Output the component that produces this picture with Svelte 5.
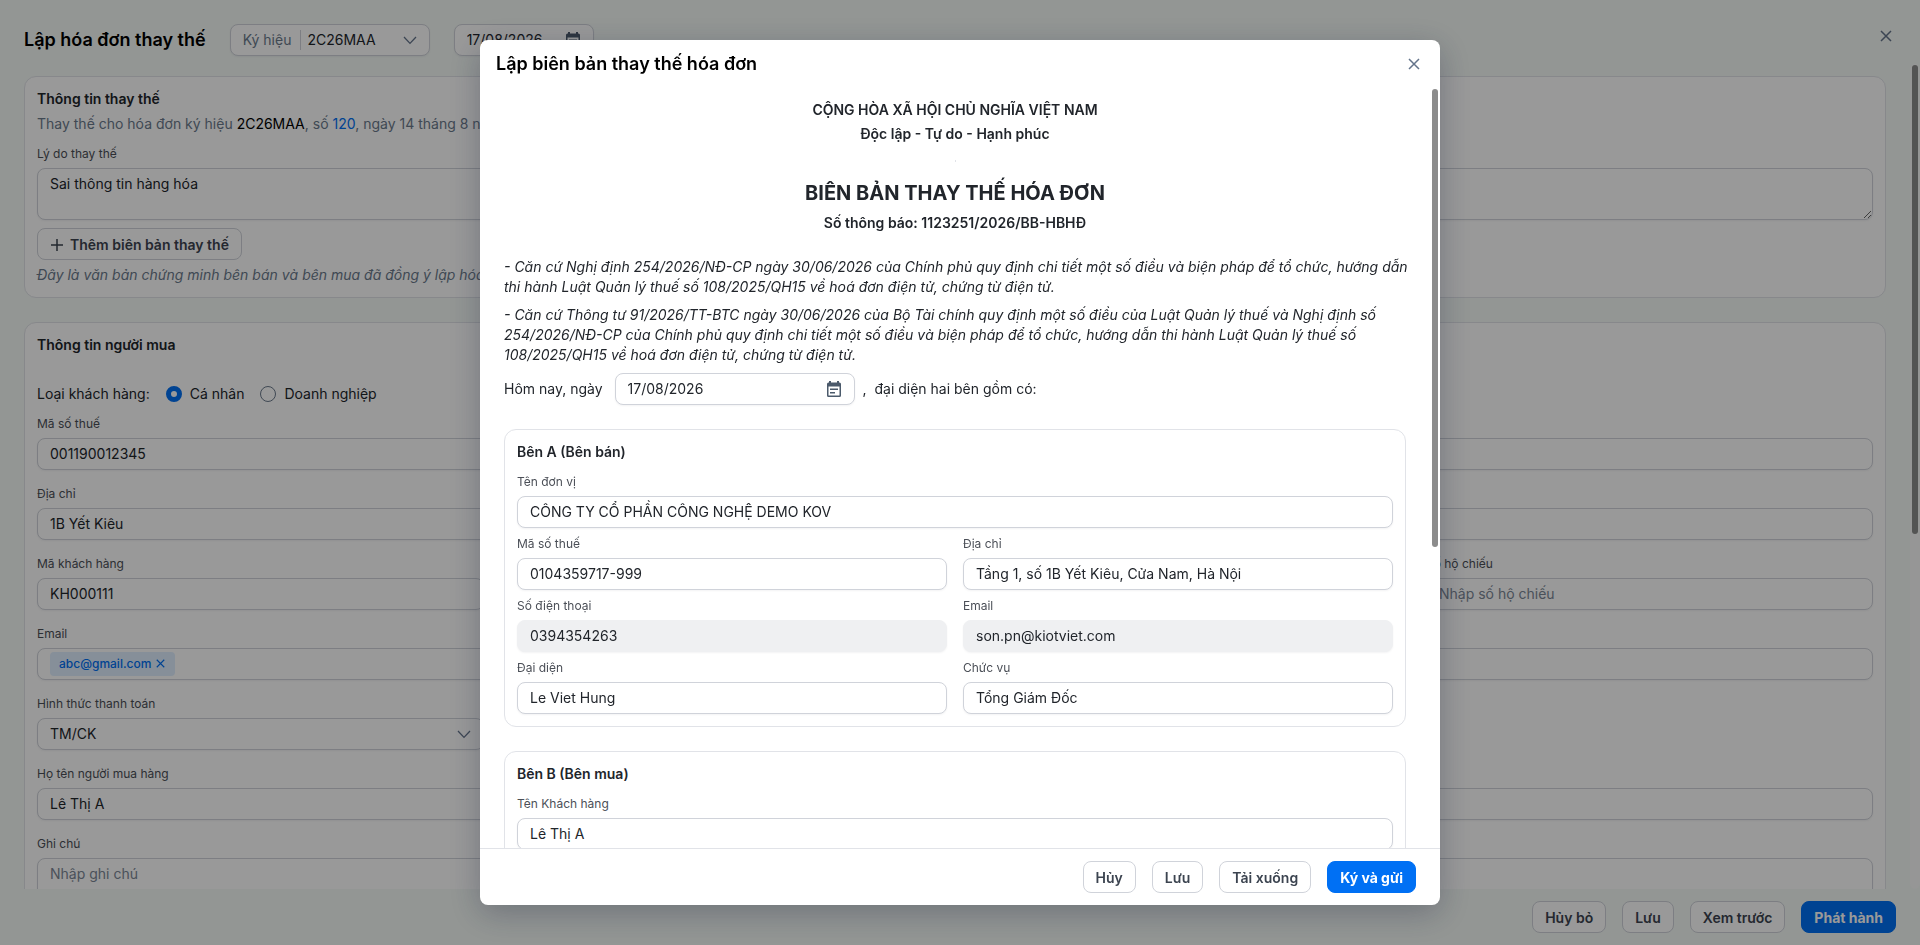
<script lang="ts">
	interface Field {
		id: string;
		label: string;
		value?: string;
		placeholder?: string;
		type?: 'text' | 'line' | 'textarea' | 'select' | 'tags';
		size?: 'full' | 'half' | 'first' | 'last';
		disabled?: boolean;
	}

	let reason = $state('Sai thông tin hàng hóa');
	let customerType = $state('personal');
	let emails = $state(['abc@gmail.com']);

	const buyerFields: Field[] = [
		{ id: 'tax', label: 'Mã số thuế', value: '001190012345' },
		{ id: 'address', label: 'Địa chỉ', value: '1B Yết Kiêu' },
		{ id: 'code', label: 'Mã khách hàng', value: 'KH000111', size: 'first' },
		{ id: 'passport', label: 'Số hộ chiếu', placeholder: 'Nhập số hộ chiếu', size: 'last' },
		{ id: 'email', label: 'Email', type: 'tags' },
		{ id: 'payment', label: 'Hình thức thanh toán', value: 'TM/CK', type: 'select', size: 'first' },
		{ id: 'buyer', label: 'Họ tên người mua hàng', value: 'Lê Thị A' },
		{ id: 'note', label: 'Ghi chú', placeholder: 'Nhập ghi chú', type: 'textarea' }
	];

	const sellerFields: Field[] = [
		{ id: 'a-name', label: 'Tên đơn vị', value: 'CÔNG TY CỔ PHẦN CÔNG NGHỆ DEMO KOV', type: 'line' },
		{ id: 'a-tax', label: 'Mã số thuế', value: '0104359717-999', size: 'half' },
		{ id: 'a-address', label: 'Địa chỉ', value: 'Tầng 1, số 1B Yết Kiêu, Cửa Nam, Hà Nội', size: 'half' },
		{ id: 'a-phone', label: 'Số điện thoại', value: '0394354263', size: 'half', disabled: true },
		{ id: 'a-email', label: 'Email', value: 'son.pn@kiotviet.com', size: 'half', disabled: true },
		{ id: 'a-rep', label: 'Đại diện', value: 'Le Viet Hung', size: 'half' },
		{ id: 'a-role', label: 'Chức vụ', value: 'Tổng Giám Đốc', size: 'half' }
	];

	const customerFields: Field[] = [
		{ id: 'b-name', label: 'Tên Khách hàng', value: 'Lê Thị A', type: 'line' }
	];

	function removeEmail(email: string) {
		emails = emails.filter((item) => item !== email);
	}
</script>

{#snippet closeIcon(size: number)}
	<svg width={size} height={size} viewBox="0 0 12 12" aria-hidden="true">
		<path d="M1 1l10 10M11 1L1 11" fill="none" stroke="currentColor" stroke-width="1.5" />
	</svg>
{/snippet}

{#snippet chevron()}
	<svg class="chevron" width="14" height="14" viewBox="0 0 14 14" aria-hidden="true">
		<path d="M1 4l6 6.4L13 4" fill="none" stroke="currentColor" stroke-width="1.3" />
	</svg>
{/snippet}

{#snippet calendar()}
	<svg class="calendar" width="16" height="18" viewBox="0 0 16 18" aria-hidden="true">
		<path
			fill="currentColor"
			fill-rule="evenodd"
			d="M3 1h2v1.5h6V1h2v1.5h.5A1.5 1.5 0 0 1 15 4v11.5a1.5 1.5 0 0 1-1.5 1.5h-11A1.5 1.5 0 0 1 1 15.5V4a1.5 1.5 0 0 1 1.5-1.5H3zM2.5 6.5v9h11v-9zM4 8.5h8V10H4zM4 12h5v1.5H4z"
		/>
	</svg>
{/snippet}

{#snippet fieldBox(field: Field)}
	<div class="field {field.size ?? 'full'}">
		<label for={field.id}>{field.label}</label>
		{#if field.type === 'textarea'}
			<textarea class="control" id={field.id} placeholder={field.placeholder}></textarea>
		{:else if field.type === 'line'}
			<textarea class="control line" id={field.id} rows="1" value={field.value}></textarea>
		{:else if field.type === 'select'}
			<div class="control with-icon">
				<select id={field.id}>
					<option>{field.value}</option>
				</select>
				{@render chevron()}
			</div>
		{:else if field.type === 'tags'}
			<div class="control tags">
				{#each emails as email}
					<span class="tag">
						{email}
						<button type="button" aria-label="Xóa" onclick={() => removeEmail(email)}>
							{@render closeIcon(9)}
						</button>
					</span>
				{/each}
				<input id={field.id} type="text" />
			</div>
		{:else}
			<input
				class="control"
				id={field.id}
				type="text"
				value={field.value ?? ''}
				placeholder={field.placeholder}
				disabled={field.disabled}
			/>
		{/if}
	</div>
{/snippet}

<div class="page">
	<header class="page-header">
		<h1>Lập hóa đơn thay thế</h1>
		<div class="control with-icon symbol">
			<label for="symbol">Ký hiệu</label>
			<select id="symbol">
				<option>2C26MAA</option>
			</select>
			{@render chevron()}
		</div>
		<div class="control with-icon invoice-date">
			<input type="text" aria-label="Ngày hóa đơn" value="17/08/2026" />
			{@render calendar()}
		</div>
		<button class="close" type="button" aria-label="Đóng">{@render closeIcon(12)}</button>
	</header>

	<div class="scroller">
		<main class="content">
			<section class="card">
				<h2>Thông tin thay thế</h2>
				<p class="origin">
					Thay thế cho hóa đơn ký hiệu <strong>2C26MAA</strong>, số <a href="#120">120</a>, ngày 14 tháng 8 năm 2026
				</p>
				<div class="field">
					<label for="reason">Lý do thay thế</label>
					<textarea class="control" id="reason" bind:value={reason}></textarea>
				</div>
				<button class="btn add" type="button">
					<svg width="14" height="14" viewBox="0 0 14 14" aria-hidden="true">
						<path d="M7 1v12M1 7h12" fill="none" stroke="currentColor" stroke-width="1.5" />
					</svg>
					Thêm biên bản thay thế
				</button>
				<p class="hint">Đây là văn bản chứng minh bên bán và bên mua đã đồng ý lập hóa</p>
			</section>

			<section class="card">
				<h2>Thông tin người mua</h2>
				<div class="customer-type" role="radiogroup" aria-label="Loại khách hàng">
					<span>Loại khách hàng:</span>
					<label>
						<input type="radio" value="personal" bind:group={customerType} />
						Cá nhân
					</label>
					<label>
						<input type="radio" value="company" bind:group={customerType} />
						Doanh nghiệp
					</label>
				</div>
				<div class="fields buyer">
					{#each buyerFields as field (field.id)}
						{@render fieldBox(field)}
					{/each}
				</div>
			</section>
		</main>
		<div class="track"><div class="thumb page-thumb"></div></div>
	</div>

	<footer class="actions">
		<button class="btn" type="button">Hủy bỏ</button>
		<button class="btn" type="button">Lưu</button>
		<button class="btn" type="button">Xem trước</button>
		<button class="btn primary" type="button">Phát hành</button>
	</footer>
</div>

<div class="backdrop">
	<div class="modal" role="dialog" aria-modal="true" aria-labelledby="modal-title">
		<header class="modal-header">
			<h1 id="modal-title">Lập biên bản thay thế hóa đơn</h1>
			<button class="close" type="button" aria-label="Đóng">{@render closeIcon(12)}</button>
		</header>

		<div class="scroller">
			<div class="content document">
				<div class="national">
					<p>CỘNG HÒA XÃ HỘI CHỦ NGHĨA VIỆT NAM</p>
					<p>Độc lập - Tự do - Hạnh phúc</p>
					<hr />
				</div>
				<div class="heading">
					<h2>BIÊN BẢN THAY THẾ HÓA ĐƠN</h2>
					<p>Số thông báo: 1123251/2026/BB-HBHĐ</p>
				</div>
				<p class="basis">
					- Căn cứ Nghị định 254/2026/NĐ-CP ngày 30/06/2026 của Chính phủ quy định chi tiết một số điều và
					biện pháp để tổ chức, hướng dẫn thi hành Luật Quản lý thuế số 108/2025/QH15 về hoá đơn điện tử,
					chứng từ điện tử.
				</p>
				<p class="basis">
					- Căn cứ Thông tư 91/2026/TT-BTC ngày 30/06/2026 của Bộ Tài chính quy định một số điều của Luật
					Quản lý thuế và Nghị định số 254/2026/NĐ-CP của Chính phủ quy định chi tiết một số điều và biện
					pháp để tổ chức, hướng dẫn thi hành Luật Quản lý thuế số 108/2025/QH15 về hoá đơn điện tử, chứng
					từ điện tử.
				</p>
				<div class="today">
					<label for="today">Hôm nay, ngày</label>
					<div class="control with-icon">
						<input id="today" type="text" value="17/08/2026" />
						{@render calendar()}
					</div>
					<span>,&nbsp; đại diện hai bên gồm có:</span>
				</div>
				<section class="card">
					<h2>Bên A (Bên bán)</h2>
					<div class="fields">
						{#each sellerFields as field (field.id)}
							{@render fieldBox(field)}
						{/each}
					</div>
				</section>
				<section class="card">
					<h2>Bên B (Bên mua)</h2>
					<div class="fields">
						{#each customerFields as field (field.id)}
							{@render fieldBox(field)}
						{/each}
					</div>
				</section>
			</div>
			<div class="track"><div class="thumb modal-thumb"></div></div>
		</div>

		<footer class="actions">
			<button class="btn" type="button">Hủy</button>
			<button class="btn" type="button">Lưu</button>
			<button class="btn" type="button">Tải xuống</button>
			<button class="btn primary" type="button">Ký và gửi</button>
		</footer>
	</div>
</div>

<style>
	:global(body) {
		font-family: Inter, 'Liberation Sans', sans-serif;
		font-size: 14px;
		line-height: 20px;
		color: #21252b;
	}
	:global(*) {
		box-sizing: border-box;
	}
	h1,
	h2,
	p {
		margin: 0;
	}
	h1 {
		font-size: 18px;
		line-height: 24px;
		font-weight: 600;
		color: #000;
	}
	h2 {
		font-size: 14px;
		line-height: 20px;
		font-weight: 600;
	}
	button,
	input,
	select,
	textarea {
		font: inherit;
		color: inherit;
	}
	svg {
		display: block;
		flex: none;
	}

	.page {
		display: flex;
		flex-direction: column;
		height: 100vh;
		background: #f5faf7;
	}
	.page-header {
		display: flex;
		align-items: center;
		padding: 24px 24px 8px;
	}
	.close {
		padding: 6px 4px;
		border: 0;
		background: none;
		color: #64748b;
		margin-left: auto;
	}
	.page-header .close {
		align-self: flex-start;
	}

	.scroller {
		flex: 1;
		min-height: 0;
		display: flex;
		overflow: hidden;
	}
	.content {
		flex: 1;
		min-width: 0;
		display: flex;
		flex-direction: column;
		gap: 24px;
		padding: 12px 24px;
	}
	.track {
		width: 10px;
		padding: 1px 2px;
		border-radius: 5px;
		background: #fafbfa;
	}
	.thumb {
		border-radius: 3px;
		background: #8c8c8c;
	}
	.page-thumb {
		height: 57%;
	}
	.modal-thumb {
		height: 60.4%;
	}

	.card {
		flex: none;
		display: flex;
		flex-direction: column;
		padding: 12px;
		border: 1px solid #e1e3e8;
		border-radius: 12px;
		background: #fff;
	}
	.origin {
		margin: 5px 0 10px;
		color: #6b7a8c;
	}
	.origin strong {
		font-weight: 400;
		color: #000;
	}
	.origin a {
		color: #0070f4;
		text-decoration: none;
	}
	.hint {
		margin-top: 5px;
		font-style: italic;
		color: #6b7a8c;
	}

	.control {
		display: block;
		width: 100%;
		height: 32px;
		padding: 0 12px 1px;
		border: 1px solid #d0d3da;
		border-radius: 8px;
		background: #fff;
		box-shadow: 0 1px 2px rgba(16, 24, 40, 0.05);
		outline: none;
	}
	.control::placeholder {
		color: #7c8796;
	}
	.control:disabled {
		border-color: #eff0f2;
		background: #eff0f2;
	}
	textarea.control {
		height: 52px;
		padding: 5px 12px;
		resize: vertical;
	}
	textarea.line {
		height: 32px;
		resize: none;
		overflow: hidden;
	}
	.with-icon {
		display: flex;
		align-items: center;
		padding-bottom: 0;
	}
	.with-icon input,
	.with-icon select,
	.tags input {
		flex: 1;
		min-width: 0;
		padding: 0;
		border: 0;
		background: none;
		outline: none;
		appearance: none;
	}
	.chevron {
		color: #64748b;
	}
	.calendar {
		color: #4b5a6b;
	}
	.symbol {
		width: 200px;
		margin-left: 24px;
	}
	.symbol label {
		padding-right: 9px;
		margin-right: 6px;
		border-right: 1px solid #d0d3da;
		color: #6b7a8c;
	}
	.invoice-date {
		width: 140px;
		margin-left: 24px;
	}

	.field label {
		display: block;
		margin-bottom: 4px;
		font-size: 12px;
		line-height: 20px;
		color: #4b4f57;
	}
	.fields {
		display: grid;
		grid-template-columns: repeat(4, 1fr);
		gap: 6px 16px;
		margin-top: 10px;
	}
	.buyer {
		row-gap: 14px;
	}
	.full {
		grid-column: 1 / -1;
	}
	.half {
		grid-column: span 2;
	}
	.first {
		grid-column: 1;
	}
	.last {
		grid-column: 4;
	}

	.tags {
		display: flex;
		align-items: center;
	}
	.tag {
		display: flex;
		align-items: center;
		gap: 4px;
		height: 24px;
		padding: 0 9px;
		border-radius: 4px;
		background: #dfefff;
		color: #0070f4;
		font-size: 12px;
		font-weight: 500;
	}
	.tag button {
		padding: 1px;
		border: 0;
		background: none;
	}

	.customer-type {
		display: flex;
		align-items: center;
		gap: 16px;
		margin-top: 29px;
	}
	.customer-type label {
		display: flex;
		align-items: center;
		gap: 8px;
	}
	.customer-type input {
		width: 16px;
		height: 16px;
		margin: 0;
		border: 1px solid #6b7a8c;
		border-radius: 50%;
		background: #fff;
		appearance: none;
	}
	.customer-type input:checked {
		border: 5px solid #0070f4;
	}

	.btn {
		display: flex;
		align-items: center;
		gap: 6px;
		height: 32px;
		padding: 1px 12px 0;
		border: 1px solid #d0d3da;
		border-radius: 8px;
		background: #fff;
		color: #3c4450;
		font-weight: 600;
		white-space: nowrap;
	}
	.btn.primary {
		border-color: #0070f4;
		background: #0070f4;
		color: #fff;
		font-weight: 700;
	}
	.add {
		align-self: flex-start;
		margin-top: 8px;
	}
	.actions {
		display: flex;
		justify-content: flex-end;
		gap: 16px;
		padding: 12px 24px;
	}

	.backdrop {
		position: fixed;
		inset: 0;
		display: flex;
		justify-content: center;
		padding: 40px;
		background: rgba(0, 0, 0, 0.4);
	}
	.modal {
		display: flex;
		flex-direction: column;
		width: 50vw;
		border-radius: 8px;
		background: #fff;
		box-shadow: 0 8px 32px rgba(24, 32, 56, 0.3);
		overflow: hidden;
	}
	.modal-header {
		display: flex;
		align-items: center;
		padding: 12px 16px;
	}
	.modal .track {
		background: none;
	}
	.modal .actions {
		border-top: 1px solid #e1e3e8;
	}
	.document {
		gap: 8px;
	}
	.document > .card {
		margin-top: 16px;
	}
	.national,
	.heading {
		display: flex;
		flex-direction: column;
		gap: 4px;
		text-align: center;
		font-weight: 600;
	}
	.national hr {
		width: 1px;
		margin: 12px auto 8px;
		border: 1px solid #e1e3e8;
		border-width: 0 0 2px;
	}
	.heading {
		gap: 5px;
		margin-bottom: 16px;
	}
	.heading h2 {
		font-size: 20px;
		line-height: 30px;
		font-weight: 700;
	}
	/* lets the slanted text run slightly past the column before it wraps */
	.basis {
		margin-right: -4px;
		font-style: italic;
	}
	.today {
		display: flex;
		align-items: center;
	}
	.today .control {
		width: 240px;
		margin: 0 8px 0 12px;
	}
</style>
